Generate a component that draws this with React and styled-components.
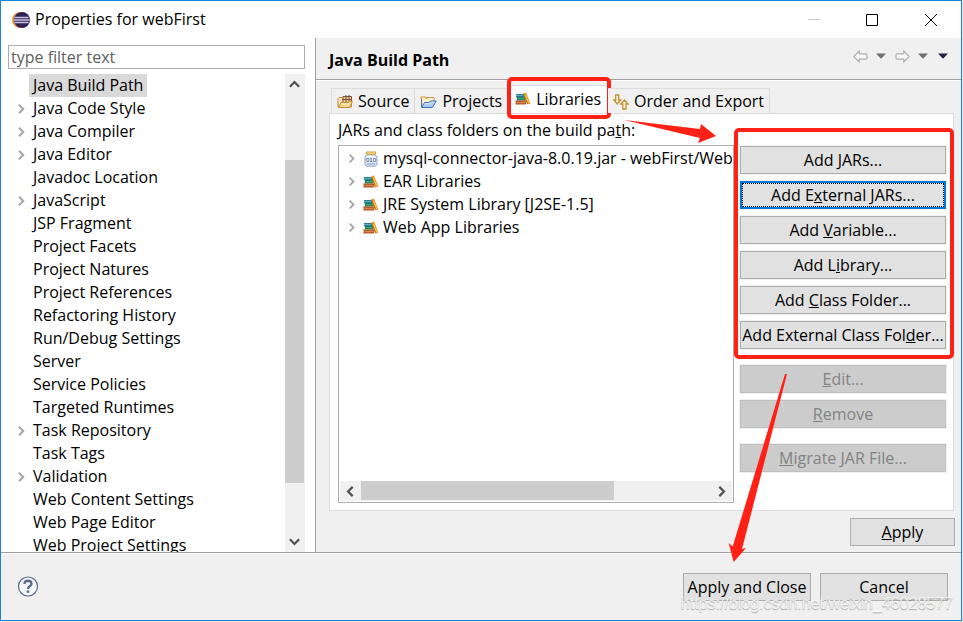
import React from 'react';
import styled, { createGlobalStyle } from 'styled-components';

const GlobalStyle = createGlobalStyle`
  * {
    box-sizing: border-box;
  }
  body {
    margin: 0;
    background: #e3e6ea;
    color: #000;
    font: 16px/23px "Open Sans", "Noto Sans", sans-serif;
  }
  button, input {
    font: inherit;
    color: inherit;
  }
  ul {
    list-style: none;
    margin: 0;
    padding: 0;
  }
  svg {
    display: block;
    flex: none;
  }
`;

const Page = styled.div`
  height: 100vh;
  min-height: 600px;
  padding: 0 1px 1px 0;
`;

const Dialog = styled.div`
  position: relative;
  display: flex;
  flex-direction: column;
  height: 100%;
  border: 1px solid #1883d7;
  background: #f0f0f0;
`;

const TitleBar = styled.header`
  display: flex;
  align-items: center;
  gap: 5px;
  height: 37px;
  padding-left: 11px;
  background: #fff;
`;

const WindowTitle = styled.div`
  flex: 1;
`;

const WindowButtons = styled.div`
  display: flex;
`;

const IconButton = styled.button`
  display: flex;
  align-items: center;
  justify-content: center;
  width: ${props => props.$width}px;
  height: ${props => props.$height}px;
  padding: 0;
  border: none;
  background: none;
`;

const Main = styled.div`
  display: flex;
  flex: 1;
  min-height: 0;
`;

const Sidebar = styled.nav`
  display: flex;
  flex-direction: column;
  gap: 5px;
  width: 315px;
  padding: 7px 10px 0 7px;
  border-right: 1px solid #a0a0a0;
  background: #fff;
`;

const Filter = styled.input`
  width: 100%;
  height: 24px;
  padding: 0 2px;
  border: 1px solid #abadb3;
  background: #fff;
  &::placeholder {
    color: #606060;
    opacity: 1;
  }
`;

const TreeArea = styled.div`
  display: flex;
  flex: 1;
  min-height: 0;
`;

const TreeList = styled.ul`
  flex: 1;
  min-width: 0;
  overflow: hidden;
`;

const TreeRow = styled.li`
  display: flex;
  align-items: center;
  height: 23px;
  padding-left: ${props => props.$indent}px;
  white-space: nowrap;
`;

const Twisty = styled.span`
  width: ${props => props.$width}px;
  flex: none;
`;

const TreeLabel = styled.span`
  padding: 0 4px;
  background: ${props => (props.$selected ? '#d9d9d9' : 'transparent')};
`;

const ScrollBar = styled.div`
  display: flex;
  flex-direction: ${props => (props.$horizontal ? 'row' : 'column')};
  ${props => (props.$horizontal ? 'height' : 'width')}: 20px;
  flex: none;
  background: #f0f0f0;
`;

const ScrollTrack = styled.div`
  display: flex;
  flex-direction: inherit;
  flex: 1;
  padding: ${props => (props.$horizontal ? '0 0 1px' : '0 1px 0 0')};
`;

const Space = styled.div`
  flex: ${props => props.$grow};
`;

const Thumb = styled.div`
  flex: ${props => props.$grow};
  background: #cdcdcd;
`;

const Content = styled.main`
  display: flex;
  flex-direction: column;
  flex: 1;
  min-width: 0;
`;

const ContentHeader = styled.div`
  display: flex;
  align-items: center;
  justify-content: space-between;
  height: 42px;
  padding: 4px 7px 0 13px;
  border-bottom: 1px solid #a0a0a0;
  box-shadow: 0 1px 0 #fff;
`;

const PageTitle = styled.h1`
  margin: 0;
  font-size: 16px;
  font-weight: bold;
`;

const ToolBar = styled.div`
  display: flex;
  align-self: flex-start;
  padding-top: 4px;
`;

const Tabs = styled.div`
  display: flex;
  align-items: flex-end;
  height: 33px;
  margin-left: 15px;
`;

const Tab = styled.button`
  position: relative;
  display: flex;
  align-items: center;
  gap: 5px;
  height: ${props => (props.$active ? 28 : 25)}px;
  padding: ${props => (props.$active ? '0 6px 1px' : '1px 5px 0')};
  border: 1px solid #dcdcdc;
  border-bottom: none;
  border-left-width: ${props => (props.$joined ? 0 : 1)}px;
  background: ${props => (props.$active ? '#fff' : '#f0f0f0')};
  white-space: nowrap;
`;

const RedFrame = styled.span`
  position: absolute;
  inset: ${props => props.$inset};
  border: 4px solid #ff2016;
  border-radius: 5px;
  pointer-events: none;
`;

const TabPanel = styled.section`
  display: flex;
  flex: 1;
  flex-direction: column;
  min-height: 0;
  margin: 0 7px 0 13px;
  padding: 4px 7px 7px 8px;
  border: 1px solid #dcdcdc;
  background: #fff;
`;

const PanelLabel = styled.div`
  height: 27px;
  line-height: 25px;
`;

const PanelBody = styled.div`
  display: flex;
  flex: 1;
  gap: 6px;
  min-height: 0;
`;

const Entries = styled.div`
  display: flex;
  flex: 1;
  flex-direction: column;
  min-width: 0;
  padding: 1px;
  border: 1px solid #abadb3;
`;

const ButtonColumn = styled.div`
  width: 206px;
  padding-top: 1px;
`;

const ButtonGroup = styled.div`
  position: relative;
  display: grid;
  gap: 7px;
  margin-bottom: 16px;
`;

const Button = styled.button`
  width: ${props => props.$width};
  height: 28px;
  padding: 0;
  border: ${props => (props.$focused ? '2px solid #0078d7' : '1px solid #adadad')};
  outline: ${props => (props.$focused ? '1px dotted #000' : 'none')};
  outline-offset: -3px;
  background: #e1e1e1;
  box-shadow: 0 0 0 1px #f0f0f0;
  line-height: 24px;
  white-space: nowrap;
  &:disabled {
    border-color: #bfbfbf;
    background: #cccccc;
    color: #838383;
  }
`;

const ApplyRow = styled.div`
  display: flex;
  justify-content: flex-end;
  padding: 7px 6px 6px;
`;

const Footer = styled.footer`
  display: flex;
  align-items: center;
  gap: 9px;
  height: 68px;
  padding: 0 13px 0 16px;
  border-top: 1px solid #a0a0a0;
  box-shadow: inset 0 1px 0 #fff;
`;

const Spacer = styled.div`
  flex: 1;
`;

const Arrow = styled.svg`
  position: absolute;
  top: ${props => props.$top}px;
  right: ${props => props.$right}px;
  pointer-events: none;
`;

const Watermark = styled.div`
  position: absolute;
  right: 8px;
  bottom: 5px;
  color: rgba(255, 255, 255, 0.8);
  font: 16px/22px "Liberation Sans", sans-serif;
  text-shadow: 0 1px 1px rgba(0, 0, 0, 0.3);
  pointer-events: none;
`;

const EclipseLogo = () => (
  <svg width="18" height="18" viewBox="0 0 18 18">
    <circle cx="8" cy="9" r="8" fill="#f0943a" />
    <circle cx="10" cy="9" r="8" fill="#2c2255" />
    <path d="M2.5 6.5h14M2 9h15.5M2.5 11.5h14" stroke="#c9c5dc" strokeWidth="1.4" />
  </svg>
);

const Chevron = ({ dir = 'right', color = '#a6a6a6', size = 9, weight = 2 }) => {
  const turn = { right: 0, down: 90, left: 180, up: 270 }[dir];
  return (
    <svg width={size} height={size} viewBox="0 0 10 10">
      <path d="M3 .8l4.2 4.2L3 9.2" fill="none" stroke={color} strokeWidth={weight} transform={`rotate(${turn} 5 5)`} />
    </svg>
  );
};

const NavArrow = ({ flip }) => (
  <svg width="15" height="13" viewBox="0 0 15 13">
    <path
      d="M.8 6.5L6.2 1v2.8h6.5q1.3 0 1.3 1.2v3q0 1.2-1.3 1.2H6.2V12z"
      fill="#f8f8f8"
      stroke="#b0b0b0"
      strokeWidth="1.2"
      transform={flip ? 'translate(15 0) scale(-1 1)' : undefined}
    />
  </svg>
);

const Caret = ({ color }) => (
  <svg width="10" height="6" viewBox="0 0 10 6">
    <path d="M0 .5h10L5 5.7z" fill={color} />
  </svg>
);

const Books = () => (
  <svg width="16" height="16" viewBox="0 0 16 16">
    <path d="M.5 3H8l1 1v2H.5l1.2-1.5z" fill="#237f9c" />
    <path d="M2 4.5h6" stroke="#55b0c8" />
    <path d="M1.5 6H10v3.5H1.5q1.2-1.7 0-3.5z" fill="#1f7a58" />
    <path d="M3 7.7h6.5" stroke="#4fb588" />
    <path d="M.2 9.6H11v3.9H.2q1.2-1.9 0-3.9z" fill="#b65a2a" />
    <path d="M2 11.5h8.5" stroke="#d98552" strokeWidth="1.2" />
    <path d="M8 2.6l3-1L15.4 12.5l-2.8 1z" fill="#e29a2c" />
    <path d="M8.6 3l3.9 10" stroke="#b96c13" />
    <path d="M10.6 4l3.2 8" stroke="#ffc861" />
  </svg>
);

const SourceFolder = () => (
  <svg width="16" height="16" viewBox="0 0 16 16">
    <path d="M1 13V4.5l1-1h3l1 1v2h8.5V13z" fill="#fae6b5" stroke="#c58a3a" />
    <path d="M6 2.5h8.5v6H6z" fill="#e8c9a0" stroke="#805132" />
    <path d="M9 1v8M12 1v8M5.5 5.5H15" stroke="#805132" />
    <path d="M1.5 13.5L4 8.5h7l1.5-1.2h3L12.5 13.5z" fill="#fbdc8b" stroke="#c58a3a" />
    <path d="M5 9.7h7" stroke="#fff4cf" />
  </svg>
);

const ProjectFolder = () => (
  <svg width="17" height="16" viewBox="0 0 17 16">
    <path d="M1.5 13V4.5H.8V3h5v1.5h1V3.5H14V8" fill="#fcf0c8" stroke="#c59a4a" />
    <path d="M1.5 13V5" stroke="#4870b4" />
    <path d="M1.5 13.5L4.5 8.5H9l1.5-1.5h5.7L12.5 13.5z" fill="#a9cdf6" stroke="#426cb4" />
    <path d="M5 9.7h5l1.3-1.4h3" fill="none" stroke="#e0f0ff" />
  </svg>
);

const OrderArrows = () => (
  <svg width="16" height="16" viewBox="0 0 16 16" fill="#fff3c8" stroke="#c2923a" strokeWidth="1.3">
    <path d="M2.7 1h3v5h2L4.2 10 .8 6h1.9z" />
    <path d="M9.8 15h3.2v-5h2.2L11.4 6 7.8 10h2z" />
  </svg>
);

const Jar = () => (
  <svg width="16" height="16" viewBox="0 0 15 16">
    <path d="M3 4h9l1.5 2v7.5l-1.5 1.7H3l-1.5-1.7V6z" fill="#e2edf9" stroke="#8fa3c0" />
    <path d="M3.5 5.2h8" stroke="#fff" />
    <path d="M2.8 1h9.4v2.2H2.8z" fill="#f8e3a0" stroke="#c99c38" />
    <path d="M3 13h9" stroke="#a9c2e2" strokeWidth="2" />
    <text x="7.5" y="11" textAnchor="middle" fontFamily="Liberation Sans, sans-serif" fontSize="6" fill="#33456a">010</text>
  </svg>
);

const HelpIcon = () => (
  <svg width="22" height="22" viewBox="0 0 22 22" fill="none" stroke="#5a6a8c">
    <circle cx="11" cy="10.5" r="9.5" fill="#f6f8fb" strokeWidth="1.2" />
    <path d="M7.4 7.9Q7.6 4.7 11 4.7t3.5 3q0 1.5-1.8 2.6T11 13.1" strokeWidth="2.4" />
    <path d="M11 14.5v2.3" strokeWidth="2.6" />
  </svg>
);

const pages = [
  { name: 'Java Build Path', selected: true },
  { name: 'Java Code Style', parent: true },
  { name: 'Java Compiler', parent: true },
  { name: 'Java Editor', parent: true },
  { name: 'Javadoc Location' },
  { name: 'JavaScript', parent: true },
  { name: 'JSP Fragment' },
  { name: 'Project Facets' },
  { name: 'Project Natures' },
  { name: 'Project References' },
  { name: 'Refactoring History' },
  { name: 'Run/Debug Settings' },
  { name: 'Server' },
  { name: 'Service Policies' },
  { name: 'Targeted Runtimes' },
  { name: 'Task Repository', parent: true },
  { name: 'Task Tags' },
  { name: 'Validation', parent: true },
  { name: 'Web Content Settings' },
  { name: 'Web Page Editor' },
  { name: 'Web Project Settings' },
];

const entries = [
  { name: 'mysql-connector-java-8.0.19.jar - webFirst/WebC', icon: Jar },
  { name: 'EAR Libraries', icon: Books },
  { name: 'JRE System Library [J2SE-1.5]', icon: Books },
  { name: 'Web App Libraries', icon: Books },
];

// "&" marks the letter that is the shortcut
const Mnemonic = ({ text }) => {
  const at = text.indexOf('&');
  if (at < 0) return text;
  return (
    <>
      {text.slice(0, at)}
      <u>{text[at + 1]}</u>
      {text.slice(at + 2)}
    </>
  );
};

const addButtons = [
  'Add &JARs...',
  'Add E&xternal JARs...',
  'Add &Variable...',
  'Add L&ibrary...',
  'Add &Class Folder...',
  'Add External Class Fol&der...',
];

const Scroll = ({ horizontal, before, thumb, after }) => (
  <ScrollBar $horizontal={horizontal}>
    <IconButton $width={horizontal ? 21 : 19} $height={20} aria-label="Scroll back">
      <Chevron dir={horizontal ? 'left' : 'up'} color="#505050" size={11} />
    </IconButton>
    <ScrollTrack $horizontal={horizontal}>
      <Space $grow={before} />
      <Thumb $grow={thumb} />
      <Space $grow={after} />
    </ScrollTrack>
    <IconButton $width={horizontal ? 21 : 19} $height={horizontal ? 20 : 22} aria-label="Scroll forward">
      <Chevron dir={horizontal ? 'right' : 'down'} color="#505050" size={11} />
    </IconButton>
  </ScrollBar>
);

export default class App extends React.Component {
  render() {
    return (
      <Page>
        <GlobalStyle />
        <Dialog>
          <TitleBar>
            <EclipseLogo />
            <WindowTitle>Properties for webFirst</WindowTitle>
            <WindowButtons>
              <IconButton $width={58} $height={36} aria-label="Minimize" disabled>
                <svg width="12" height="12"><path d="M0 5.5h12" stroke="#ccc" /></svg>
              </IconButton>
              <IconButton $width={58} $height={36} aria-label="Maximize">
                <svg width="12" height="12"><path d="M.5.5h11v11H.5z" fill="none" stroke="#000" /></svg>
              </IconButton>
              <IconButton $width={60} $height={36} aria-label="Close">
                <svg width="12" height="12"><path d="M0 0l12 12M12 0L0 12" stroke="#000" /></svg>
              </IconButton>
            </WindowButtons>
          </TitleBar>
          <Main>
            <Sidebar>
              <Filter placeholder="type filter text" aria-label="type filter text" />
              <TreeArea>
                <TreeList>
                  {pages.map(page => (
                    <TreeRow key={page.name} $indent={8}>
                      <Twisty $width={13}>{page.parent && <Chevron size={10} />}</Twisty>
                      <TreeLabel $selected={page.selected}>{page.name}</TreeLabel>
                    </TreeRow>
                  ))}
                </TreeList>
                <Scroll before={66} thumb={323} after={47} />
              </TreeArea>
            </Sidebar>
            <Content>
              <ContentHeader>
                <PageTitle>Java Build Path</PageTitle>
                <ToolBar>
                  <IconButton $width={24} $height={20} aria-label="Back"><NavArrow /></IconButton>
                  <IconButton $width={18} $height={20} aria-label="Back history"><Caret color="#6f6f73" /></IconButton>
                  <IconButton $width={24} $height={20} aria-label="Forward"><NavArrow flip /></IconButton>
                  <IconButton $width={18} $height={20} aria-label="Forward history"><Caret color="#6f6f73" /></IconButton>
                  <IconButton $width={22} $height={20} aria-label="Menu"><Caret color="#2d1c48" /></IconButton>
                </ToolBar>
              </ContentHeader>
              <Tabs role="tablist">
                <Tab role="tab"><SourceFolder />Source</Tab>
                <Tab role="tab" $joined><ProjectFolder />Projects</Tab>
                <Tab role="tab" aria-selected="true" $active>
                  <Books />Libraries
                  <RedFrame $inset="-9px -4px -6px -2px" />
                </Tab>
                <Tab role="tab" $joined><OrderArrows />Order and Export</Tab>
              </Tabs>
              <TabPanel role="tabpanel">
                <PanelLabel><Mnemonic text="JARs and class folders on the build pa&th:" /></PanelLabel>
                <PanelBody>
                  <Entries>
                    <TreeList>
                      {entries.map(({ name, icon: Icon }) => (
                        <TreeRow key={name} $indent={7}>
                          <Twisty $width={16}><Chevron size={9} /></Twisty>
                          <Icon />
                          <TreeLabel>{name}</TreeLabel>
                        </TreeRow>
                      ))}
                    </TreeList>
                    <Scroll horizontal before={0} thumb={253} after={97} />
                  </Entries>
                  <ButtonColumn>
                    <ButtonGroup>
                      {addButtons.map((text, i) => (
                        <Button key={text} $width="100%" $focused={i === 1}><Mnemonic text={text} /></Button>
                      ))}
                      <RedFrame $inset="-18px -8px -10px -6px" />
                    </ButtonGroup>
                    <ButtonGroup>
                      <Button $width="100%" disabled><Mnemonic text="&Edit..." /></Button>
                      <Button $width="100%" disabled><Mnemonic text="&Remove" /></Button>
                    </ButtonGroup>
                    <Button $width="100%" disabled><Mnemonic text="&Migrate JAR File..." /></Button>
                  </ButtonColumn>
                </PanelBody>
              </TabPanel>
              <ApplyRow>
                <Button $width="105px"><Mnemonic text="&Apply" /></Button>
              </ApplyRow>
            </Content>
          </Main>
          <Footer>
            <IconButton $width={22} $height={22} aria-label="Help"><HelpIcon /></IconButton>
            <Spacer />
            <Button $width="128px">Apply and Close</Button>
            <Button $width="128px">Cancel</Button>
          </Footer>
          <Arrow $top={118} $right={243} width="94" height="26" viewBox="0 0 94 26">
            <path d="M0 1L76 10 77 5 92 17 74 24 76 19z" fill="#ff2016" />
          </Arrow>
          <Arrow $top={372} $right={173} width="60" height="191" viewBox="0 0 60 191">
            <path d="M59 1L14 176l4-1L5.7 189 .7 170l4 3.5L57 1z" fill="#ff2016" />
          </Arrow>
          <Watermark>https://blog.csdn.net/weixin_46028577</Watermark>
        </Dialog>
      </Page>
    );
  }
}
